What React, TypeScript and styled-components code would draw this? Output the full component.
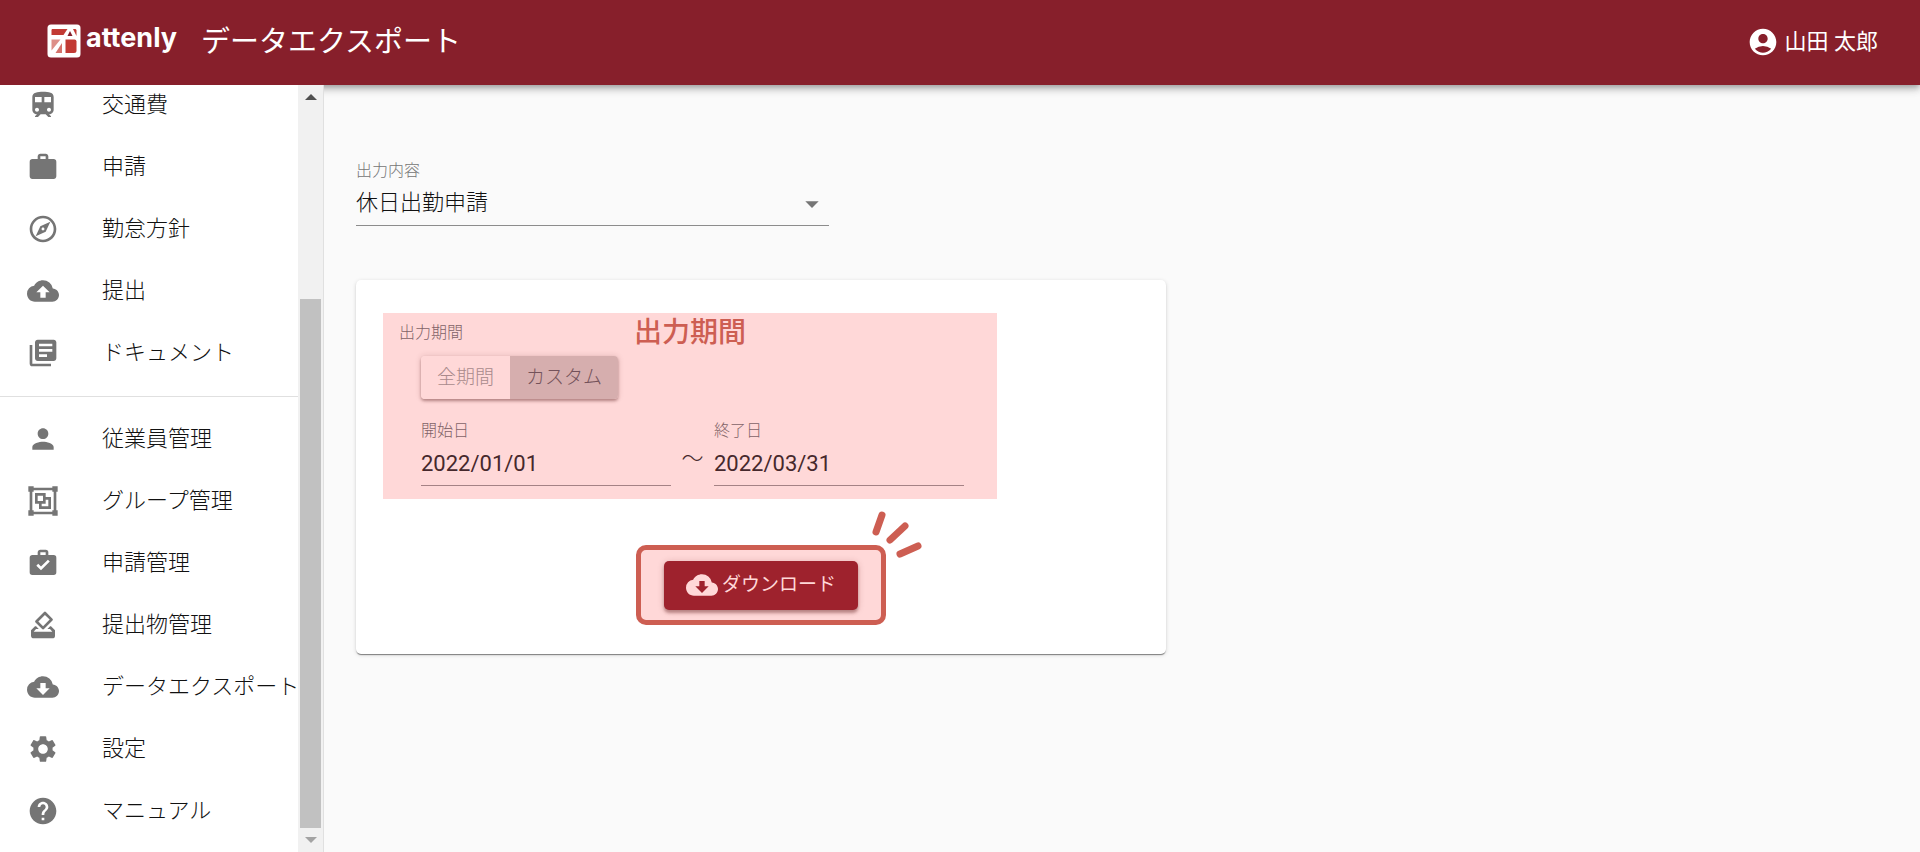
import { useState, type ReactNode } from "react";
import styled, { createGlobalStyle } from "styled-components";
import {
  MdAccountCircle,
  MdBackup,
  MdCloudDownload,
  MdHelp,
  MdHowToVote,
  MdLibraryBooks,
  MdOutlineExplore,
  MdPerson,
  MdSettings,
  MdTrain,
  MdWork,
} from "react-icons/md";

const GlobalStyle = createGlobalStyle`
  *, *::before, *::after { box-sizing: border-box; }
  body {
    margin: 0;
    background: #fafafa;
    color: #111;
    font-family: Roboto, "Noto Sans CJK JP", sans-serif;
    font-weight: 300;
    font-size: 22px;
    line-height: 30px;
  }
  button, input, select { font: inherit; color: inherit; }
`;

const Shell = styled.div`
  display: flex;
  flex-direction: column;
  height: 100vh;
`;

const Header = styled.header`
  position: relative;
  flex: none;
  display: flex;
  align-items: center;
  height: 85px;
  padding: 0 42px 2px 47px;
  background: #871f2b;
  color: #fff;
  box-shadow: 0 3px 5px -1px rgba(0, 0, 0, 0.2), 0 5px 7px rgba(0, 0, 0, 0.14),
    0 1px 13px rgba(0, 0, 0, 0.12);
`;

const Brand = styled.a`
  display: flex;
  align-items: flex-start;
  gap: 5px;
  margin-top: -2px;
  color: inherit;
  text-decoration: none;
`;

const BrandName = styled.span`
  font-family: Inter, sans-serif;
  font-weight: 700;
  font-size: 27px;
  line-height: 28px;
`;

const PageTitle = styled.h1`
  flex: 1;
  margin: 0 0 0 24px;
  font-size: 29px;
  line-height: 40px;
  font-weight: 400;
`;

const UserButton = styled.button`
  display: flex;
  align-items: center;
  gap: 6px;
  padding: 0;
  border: 0;
  background: none;
  font-weight: 400;
  cursor: pointer;
`;

const Body = styled.div`
  flex: 1;
  min-height: 0;
  display: flex;
`;

const Sidebar = styled.aside`
  position: relative;
  flex: none;
  display: flex;
  width: 324px;
  border-right: 1px solid #e0e0e0;
  background: #fff;
`;

const Nav = styled.nav`
  flex: 1;
  min-width: 0;
  display: flex;
  flex-direction: column;
  justify-content: flex-end;
  padding-bottom: 10px;
  overflow: hidden;
`;

const NavGroup = styled.div`
  flex: none;
  & + & {
    margin-top: 12px;
    padding-top: 11px;
    border-top: 1px solid #e0e0e0;
  }
`;

const NavLink = styled.a`
  display: flex;
  align-items: center;
  gap: 43px;
  height: 62px;
  padding-left: 27px;
  color: inherit;
  text-decoration: none;
  white-space: nowrap;
  svg {
    flex: none;
    color: #757575;
  }
`;

const ScrollBar = styled.div`
  flex: none;
  display: flex;
  flex-direction: column;
  width: 25px;
  padding: 0 2px;
  background: #f1f1f1;
`;

const ScrollArrow = styled.div<{ $color: string }>`
  display: flex;
  align-items: center;
  justify-content: center;
  height: 24px;
  color: ${(p) => p.$color};
`;

const ScrollSpace = styled.div`
  flex: 19;
`;

const ScrollThumb = styled.div`
  flex: 53;
  background: #c1c1c1;
`;

const Main = styled.main`
  flex: 1;
  min-width: 0;
  padding: 76px 32px 32px;
`;

const Field = styled.div<{ $width: number }>`
  position: relative;
  display: flex;
  flex-direction: column;
  width: 100%;
  max-width: ${(p) => p.$width}px;
`;

const Label = styled.label<{ $tinted?: boolean }>`
  font-size: 16px;
  line-height: 20px;
  color: ${(p) => (p.$tinted ? "#7f6367" : "#757575")};
`;

const Select = styled.select`
  appearance: none;
  height: 45px;
  padding: 0 40px 0 0;
  border: 0;
  border-bottom: 1px solid #8c8c8c;
  border-radius: 0;
  background: none;
`;

const SelectArrow = styled.svg`
  position: absolute;
  right: 1px;
  bottom: 6px;
  pointer-events: none;
  fill: #757575;
`;

const DateInput = styled.input`
  width: 100%;
  height: 45px;
  padding: 0;
  border: 0;
  border-bottom: 1px solid #a58285;
  background: none;
  color: #46282c;
  font-weight: 400;
`;

const Card = styled.section`
  display: flex;
  flex-direction: column;
  align-items: center;
  gap: 46px;
  max-width: 810px;
  margin-top: 54px;
  padding: 33px 27px 29px;
  border-radius: 5px;
  background: #fff;
  box-shadow: 0 2px 1px -1px rgba(0, 0, 0, 0.3), 0 1px 1px rgba(0, 0, 0, 0.2),
    0 1px 4px rgba(0, 0, 0, 0.14);
`;

const PeriodPanel = styled.div`
  align-self: flex-start;
  width: 100%;
  max-width: 614px;
  padding: 4px 16px 13px;
  background: #ffd8d8;
`;

const PanelHead = styled.div`
  display: grid;
  grid-template-columns: 1fr auto 1fr;
  align-items: center;
  height: 32px;
`;

const PanelTitle = styled.h2`
  margin: 0;
  font-size: 28px;
  line-height: 32px;
  font-weight: 500;
  color: #cd5e52;
`;

const PanelContent = styled.div`
  padding: 7px 0 0 22px;
`;

const Toggle = styled.div`
  display: inline-flex;
  vertical-align: top;
  border-radius: 4px;
  overflow: hidden;
  box-shadow: 0 2px 3px rgba(90, 30, 30, 0.4), 0 0 6px rgba(90, 30, 30, 0.16);
`;

const ToggleButton = styled.button<{ $selected: boolean }>`
  height: 43px;
  padding: 0 16px;
  border: 0;
  background: ${(p) => (p.$selected ? "#d6aeae" : "#ffd8d8")};
  color: ${(p) => (p.$selected ? "#74525a" : "#a98a8c")};
  font-size: 19px;
  cursor: pointer;
`;

const DateRow = styled.div`
  display: flex;
  align-items: flex-end;
  margin-top: 22px;
`;

const Tilde = styled.span`
  flex: none;
  width: 43px;
  line-height: 54px;
  text-align: center;
  color: #46282c;
`;

const Callout = styled.div`
  position: relative;
  display: flex;
  align-items: center;
  justify-content: center;
  width: 250px;
  height: 80px;
  border: 5px solid #cd5e52;
  border-radius: 10px;
  background: #ffd8d8;
`;

const Sparks = styled.svg`
  position: absolute;
  left: 229px;
  bottom: 60px;
  fill: none;
  stroke: #cd5e52;
  stroke-width: 7;
  stroke-linecap: round;
`;

const DownloadButton = styled.button`
  display: flex;
  align-items: center;
  gap: 4px;
  height: 49px;
  padding: 0 22px;
  border: 0;
  border-radius: 5px;
  background: #9e222d;
  color: #ffd8d8;
  font-size: 19px;
  font-weight: 400;
  white-space: nowrap;
  box-shadow: 0 3px 3px rgba(90, 20, 20, 0.35), 0 1px 7px rgba(90, 20, 20, 0.2);
  cursor: pointer;
`;

const GroupIcon = () => (
  <svg width="32" height="32" viewBox="0 0 24 24" fill="currentColor" fillRule="evenodd" aria-hidden="true">
    <path d="M1 1v4h1v14H1v4h4v-1h14v1h4v-4h-1V5h1V1h-4v1H5V1H1zm4 3h14v1h1v14h-1v1H5v-1H4V5h1V4z" />
    <path d="M6 6v8h3v4h9V9h-4V6H6zm2 2h4v4H8V8zm6 3h2v5h-5v-2h3v-3z" />
  </svg>
);

const WorkCheckIcon = () => (
  <svg width="32" height="32" viewBox="0 0 24 24" fill="currentColor" fillRule="evenodd" aria-hidden="true">
    <path d="M10 2h4a2 2 0 0 1 2 2v2h4a2 2 0 0 1 2 2v11a2 2 0 0 1-2 2H4a2 2 0 0 1-2-2V8c0-1.11.89-2 2-2h4V4c0-1.11.89-2 2-2m4 4V4h-4v2h4m-3.5 11.5l6.59-6.59-1.41-1.41-5.18 5.17-2.09-2.08L7 14l3.5 3.5z" />
  </svg>
);

const BrandMark = () => (
  <svg width="34" height="34" viewBox="0 0 34 34" aria-hidden="true">
    <rect x="0.5" y="0.5" width="33" height="33" rx="3.5" fill="#fff" />
    <path d="M5 5h15.5l-4 6H4.500V6z" fill="#c23a34" />
    <path d="M4.500 15.500h9l-9 11z" fill="#dd8f88" />
    <path d="M15 19v10H8.500z" fill="#d4726b" />
    <path d="M18.500 15.500h9q2 0 2 2v9q0 2.500-2.500 2.500h-8.500z" fill="#c23a34" />
    <path d="M26 5h2.500l1 1v6z" fill="#c23a34" />
    <path d="M23 7l2.500 5h-5z" fill="#871f2b" />
  </svg>
);

type NavItem = { label: string; icon: ReactNode };

const personalItems: NavItem[] = [
  { label: "交通費", icon: <MdTrain size={32} /> },
  { label: "申請", icon: <MdWork size={32} /> },
  { label: "勤怠方針", icon: <MdOutlineExplore size={32} /> },
  { label: "提出", icon: <MdBackup size={32} /> },
  { label: "ドキュメント", icon: <MdLibraryBooks size={32} /> },
];

const adminItems: NavItem[] = [
  { label: "従業員管理", icon: <MdPerson size={32} /> },
  { label: "グループ管理", icon: <GroupIcon /> },
  { label: "申請管理", icon: <WorkCheckIcon /> },
  { label: "提出物管理", icon: <MdHowToVote size={32} /> },
  { label: "データエクスポート", icon: <MdCloudDownload size={32} /> },
  { label: "設定", icon: <MdSettings size={32} /> },
  { label: "マニュアル", icon: <MdHelp size={32} /> },
];

const periods = ["全期間", "カスタム"];

export default function App() {
  const [period, setPeriod] = useState("カスタム");

  return (
    <Shell>
      <GlobalStyle />
      <Header>
        <Brand href="#">
          <BrandMark />
          <BrandName>attenly</BrandName>
        </Brand>
        <PageTitle>データエクスポート</PageTitle>
        <UserButton type="button">
          <MdAccountCircle size={32} />
          山田 太郎
        </UserButton>
      </Header>
      <Body>
        <Sidebar>
          <Nav>
            {[personalItems, adminItems].map((items, index) => (
              <NavGroup key={index}>
                {items.map((item) => (
                  <NavLink key={item.label} href="#">
                    {item.icon}
                    {item.label}
                  </NavLink>
                ))}
              </NavGroup>
            ))}
          </Nav>
          <ScrollBar aria-hidden="true">
            <ScrollArrow $color="#505050">
              <svg width="12" height="6" viewBox="0 0 12 6" fill="currentColor">
                <path d="M0 6l6-6 6 6z" />
              </svg>
            </ScrollArrow>
            <ScrollSpace />
            <ScrollThumb />
            <ScrollArrow $color="#a3a3a3">
              <svg width="12" height="6" viewBox="0 0 12 6" fill="currentColor">
                <path d="M0 0l6 6 6-6z" />
              </svg>
            </ScrollArrow>
          </ScrollBar>
        </Sidebar>
        <Main>
          <Field $width={473}>
            <Label htmlFor="content">出力内容</Label>
            <Select id="content" defaultValue="休日出勤申請">
              <option>休日出勤申請</option>
            </Select>
            <SelectArrow width="32" height="32" viewBox="0 0 24 24" aria-hidden="true">
              <path d="M7 10l5 5 5-5z" />
            </SelectArrow>
          </Field>
          <Card>
            <PeriodPanel>
              <PanelHead>
                <Label as="span" id="period-label" $tinted>
                  出力期間
                </Label>
                <PanelTitle>出力期間</PanelTitle>
              </PanelHead>
              <PanelContent>
                <Toggle role="group" aria-labelledby="period-label">
                  {periods.map((name) => (
                    <ToggleButton
                      key={name}
                      type="button"
                      $selected={name === period}
                      aria-pressed={name === period}
                      onClick={() => setPeriod(name)}
                    >
                      {name}
                    </ToggleButton>
                  ))}
                </Toggle>
                <DateRow>
                  <Field $width={250}>
                    <Label htmlFor="start" $tinted>
                      開始日
                    </Label>
                    <DateInput id="start" type="text" defaultValue="2022/01/01" />
                  </Field>
                  <Tilde>～</Tilde>
                  <Field $width={250}>
                    <Label htmlFor="end" $tinted>
                      終了日
                    </Label>
                    <DateInput id="end" type="text" defaultValue="2022/03/31" />
                  </Field>
                </DateRow>
              </PanelContent>
            </PeriodPanel>
            <Callout>
              <DownloadButton type="button">
                <MdCloudDownload size={32} />
                ダウンロード
              </DownloadButton>
              <Sparks width="54" height="50" viewBox="0 0 54 50" aria-hidden="true">
                <path d="M12 5L6 22M35 16L20 30M48 36L30 44" />
              </Sparks>
            </Callout>
          </Card>
        </Main>
      </Body>
    </Shell>
  );
}
